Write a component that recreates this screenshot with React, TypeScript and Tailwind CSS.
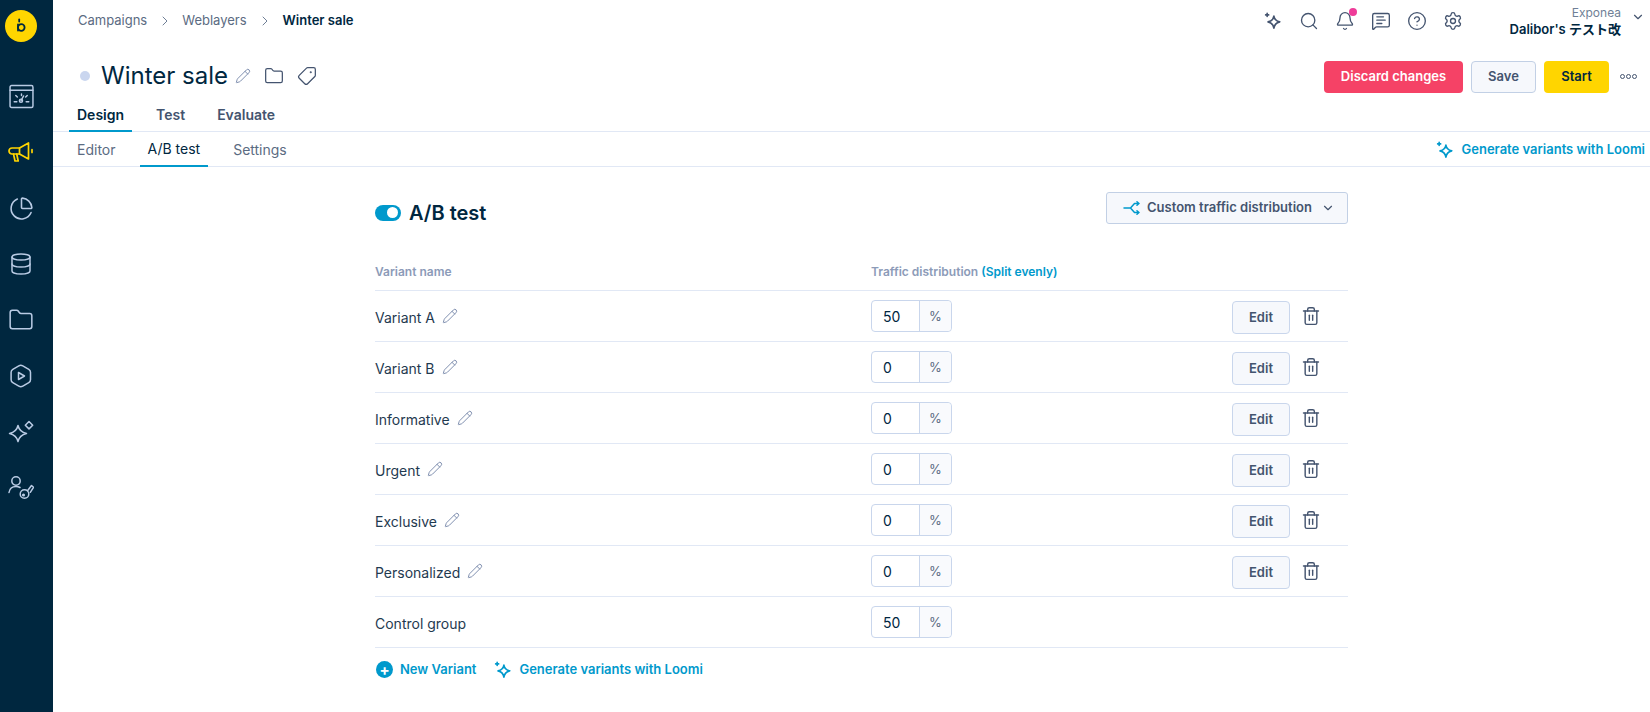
import React from 'react'
import {
  Bell,
  ChartPie,
  ChevronDown,
  ChevronRight,
  CircleHelp,
  Database,
  Folder,
  MessageSquareText,
  Pencil,
  Search,
  Settings,
  Tag,
  Trash2,
} from 'lucide-react'

const variants = [
  { name: 'Variant A', value: '50' },
  { name: 'Variant B', value: '0' },
  { name: 'Informative', value: '0' },
  { name: 'Urgent', value: '0' },
  { name: 'Exclusive', value: '0' },
  { name: 'Personalized', value: '0' },
  { name: 'Control group', value: '50', locked: true },
]

const Loomi = ({ className }: { className?: string }) => (
  <svg viewBox="0 0 20 20" fill="none" stroke="currentColor" strokeWidth="1.800" strokeLinejoin="round" strokeLinecap="round" className={className}>
    <path d="M11 4.500c.5 3.700 2 5.300 6.500 6.500-4.500 1.200-6 2.800-6.500 7-.5-4.200-2-5.800-6.500-7 4.500-1.200 6-2.800 6.500-6.500Z" />
    <path d="M3.500 1.500v3.400M1.800 3.200h3.400" />
  </svg>
)

const Logo = () => (
  <div className="w-8 h-8 rounded-full bg-[#ffd500] flex items-center justify-center">
    <svg viewBox="0 0 16 16" className="w-4 h-4" fill="none" stroke="#00273f" strokeWidth="1.800" strokeLinecap="round">
      <path d="M6.200 1.500v2" />
      <circle cx="8.300" cy="9.500" r="3.300" />
      <path d="M5 6.500v6" />
    </svg>
  </div>
)

const DashboardIcon = () => (
  <svg viewBox="0 0 24 24" className="w-[25px] h-[25px]" fill="none" stroke="#b9cbe4" strokeWidth="1.400" strokeLinecap="round">
    <rect x="1" y="1.500" width="22" height="21" rx="1.500" />
    <path d="M1 6h22M5 17h2.500M16.500 17H19M6.500 11l1.500 1.500M17.500 11 16 12.500M12 9.500v1.500M14 11.500 11.500 16" />
    <circle cx="11.500" cy="16" r="1.500" />
  </svg>
)

const MegaphoneIcon = () => (
  <svg viewBox="0 0 26 22" className="w-[26px] h-[22px]" fill="none" stroke="#ffd500" strokeWidth="1.700" strokeLinejoin="round" strokeLinecap="round">
    <path d="M4 7h7.500L20.500 2v16l-9-5H4a3 3 0 0 1 0-6Z" />
    <path d="M5.500 13l1.500 7h3.200l-1.500-7M11.500 7v6M24 8.500v3" />
  </svg>
)

const PlayHexIcon = () => (
  <svg viewBox="0 0 24 24" className="w-6 h-6" fill="none" stroke="#b9cbe4" strokeWidth="1.500" strokeLinejoin="round">
    <path d="M9.800 1.800a4 4 0 0 1 4 0l6 3.500a3.500 3.500 0 0 1 1.700 3v7.400a3.500 3.500 0 0 1-1.700 3l-6 3.500a4 4 0 0 1-4 0l-6-3.500a3.500 3.500 0 0 1-1.700-3V8.300a3.500 3.500 0 0 1 1.700-3Z" />
    <path d="M9.500 8.500v7l6-3.500Z" />
  </svg>
)

const SparkleIcon = () => (
  <svg viewBox="0 0 26 24" className="w-[26px] h-6" fill="none" stroke="#b9cbe4" strokeWidth="1.500" strokeLinejoin="round">
    <path d="M10 5.500c1 4.500 3 6.700 8.500 8-5.500 1.300-7.500 3.500-8.500 8-1-4.500-3-6.700-8.500-8 5.500-1.300 7.500-3.500 8.500-8Z" />
    <path d="m21 1.500 3.700 3.700-3.700 3.700-3.700-3.700Z" />
  </svg>
)

const UserKeyIcon = () => (
  <svg viewBox="0 0 26 26" className="w-[26px] h-[26px]" fill="none" stroke="#b9cbe4" strokeWidth="1.500" strokeLinecap="round" strokeLinejoin="round">
    <circle cx="8" cy="6" r="4.200" />
    <path d="M1 17.500c.6-3.800 3.300-6 7-6 1.500 0 2.800.3 4 1" />
    <circle cx="16.500" cy="19" r="4.300" />
    <path d="M19.500 15.800 23.500 10.500l2 1.800-3.200 5" />
    <circle cx="15.500" cy="20" r="0.800" />
  </svg>
)

const SplitIcon = () => (
  <svg viewBox="0 0 18 14" className="w-[18px] h-[14px]" fill="none" stroke="#0099cc" strokeWidth="1.500" strokeLinecap="round" strokeLinejoin="round">
    <path d="M1 7h6.500l4-4.500H16M7.500 7l4 4.500H16M14 .8 16 2.500 14 4.200M14 9.800l2 1.700-2 1.700" />
  </svg>
)

const App = () => {
  return (
    <div className="flex h-[712px] w-[1650px] overflow-hidden bg-white text-[#00273f] font-['Inter','Noto_Sans_CJK_JP',sans-serif]">
      <aside className="w-[53px] shrink-0 bg-[#00273f] flex flex-col items-center pt-[10px] pr-[11px]">
        <Logo />
        <nav className="mt-[26px] flex flex-col items-center [&>div]:h-[56px] [&>div]:flex [&>div]:items-center [&>div]:justify-center">
          <div><DashboardIcon /></div>
          <div><MegaphoneIcon /></div>
          <div><ChartPie className="w-[25px] h-[25px] text-[#b9cbe4]" strokeWidth={1.500} /></div>
          <div><Database className="w-6 h-6 text-[#b9cbe4]" strokeWidth={1.500} /></div>
          <div><Folder className="w-[26px] h-[26px] text-[#b9cbe4]" strokeWidth={1.400} /></div>
          <div><PlayHexIcon /></div>
          <div><SparkleIcon /></div>
          <div><UserKeyIcon /></div>
        </nav>
      </aside>

      <main className="flex-1 min-w-0 flex flex-col">
        <header className="h-[41px] flex items-center pl-[25px] pr-[5px]">
          <div className="flex items-center text-[13px] text-[#5b6b82]">
            <span>Campaigns</span>
            <ChevronRight className="w-4 h-4 ml-[10px] mr-[9px] text-[#6f7f96]" strokeWidth={1.500} />
            <span>Weblayers</span>
            <ChevronRight className="w-4 h-4 mx-[10px] text-[#6f7f96]" strokeWidth={1.500} />
            <span className="font-semibold text-[#00273f]">Winter sale</span>
          </div>
          <div className="ml-auto flex items-center text-[#44546f]">
            <Loomi className="w-[18px] h-[18px]" />
            <Search className="w-5 h-5 ml-[17px]" strokeWidth={1.600} />
            <div className="relative ml-4">
              <Bell className="w-5 h-5" strokeWidth={1.600} />
              <span className="absolute -top-[3px] -right-[2px] w-2 h-2 rounded-full bg-[#ee3c99]" />
            </div>
            <MessageSquareText className="w-5 h-5 ml-4" strokeWidth={1.600} />
            <CircleHelp className="w-5 h-5 ml-4" strokeWidth={1.600} />
            <Settings className="w-5 h-5 ml-4" strokeWidth={1.600} />
            <div className="ml-[47px] flex flex-col items-end leading-[17px] self-start mt-[1px]">
              <span className="text-[12px] text-[#6f7f96]">Exponea</span>
              <span className="text-[13px] font-semibold text-[#00273f]">Dalibor's テスト改</span>
            </div>
            <ChevronDown className="w-[14px] h-[14px] ml-[10px] mb-[8px]" strokeWidth={2} />
          </div>
        </header>

        <div className="h-[57px] flex items-center pl-[27px] pr-[10px] pt-[12px]">
          <span className="w-[10px] h-[10px] rounded-full bg-[#cad6ef]" />
          <h1 className="ml-[11px] text-[24px] leading-[30px] text-[#00273f]">Winter sale</h1>
          <Pencil className="w-4 h-4 ml-[7px] text-[#8090b0]" strokeWidth={1.500} />
          <Folder className="w-5 h-5 ml-[13px] text-[#44546f]" strokeWidth={1.500} />
          <Tag className="w-5 h-5 ml-[13px] text-[#44546f] rotate-90" strokeWidth={1.500} />
          <div className="ml-auto flex items-center mt-[2px]">
            <button className="h-8 w-[139px] rounded-[4px] bg-[#f54266] text-white text-[13px] font-semibold">Discard changes</button>
            <button className="ml-2 h-8 w-[65px] rounded-[4px] border border-[#c2d0e5] bg-[#f6f8fc] text-[#44546f] text-[13px] font-semibold">Save</button>
            <button className="ml-2 h-8 w-[65px] rounded-[4px] bg-[#ffd500] text-[#00273f] text-[13px] font-semibold">Start</button>
            <span className="ml-[11px] flex gap-[1px] mr-[3px]">
              <i className="w-[5px] h-[5px] rounded-full border border-[#44546f]" />
              <i className="w-[5px] h-[5px] rounded-full border border-[#44546f]" />
              <i className="w-[5px] h-[5px] rounded-full border border-[#44546f]" />
            </span>
          </div>
        </div>

        <div className="h-[34px] flex items-stretch border-b border-[#e1e8f5] pl-[16px] text-[14px] font-semibold text-[#44546f]">
          <div className="px-2 -mb-px flex items-center border-b-2 border-[#0099cc] text-[#00273f]">Design</div>
          <div className="ml-[16px] px-2 flex items-center">Test</div>
          <div className="ml-[16px] px-2 flex items-center">Evaluate</div>
        </div>

        <div className="h-[35px] flex items-stretch border-b border-[#e1e8f5] pl-[16px] pr-[5px] text-[14px] text-[#5b6b82]">
          <div className="px-2 flex items-center">Editor</div>
          <div className="ml-[16px] px-2 -mb-px flex items-center border-b-2 border-[#0099cc] text-[#00273f]">A/B test</div>
          <div className="ml-[17px] px-2 flex items-center">Settings</div>
          <div className="ml-auto flex items-center pt-[1px] text-[13px] font-semibold text-[#0099cc]">
            <Loomi className="w-[18px] h-[18px] mr-[8px]" />
            Generate variants with Loomi
          </div>
        </div>

        <section className="w-[973px] ml-[322px]">
          <div className="flex items-center justify-between mt-[25px] h-[31px]">
            <div className="flex items-center pt-[10px]">
              <span className="w-[26px] h-4 rounded-full bg-[#0099cc] flex items-center justify-end pr-[3px]">
                <span className="w-[11px] h-[11px] rounded-full bg-white" />
              </span>
              <h2 className="ml-2 text-[20px] font-semibold leading-none">A/B test</h2>
            </div>
            <button className="w-[242px] h-[32px] flex items-center pl-[16px] rounded-[3px] border border-[#c2d0e5] bg-[#f6f8fc] text-[13px] font-semibold text-[#44546f]">
              <SplitIcon />
              <span className="ml-[6px]">Custom traffic distribution</span>
              <ChevronDown className="w-[14px] h-[14px] ml-[9px]" strokeWidth={2} />
            </button>
          </div>

          <div className="mt-[30px] h-[38px] flex items-center border-b border-[#e1e8f5] text-[12px] font-semibold text-[#8c9bb8]">
            <div className="w-[496px]">Variant name</div>
            <div>Traffic distribution <span className="text-[#0099cc]">(Split evenly)</span></div>
          </div>

          {variants.map((v) => (
            <div key={v.name} className="h-[51px] flex items-center border-b border-[#e1e8f5]">
              <div className="w-[496px] pt-[2px] flex items-center text-[14px] text-[#1f3a50]">
                {v.name}
                {!v.locked && <Pencil className="w-4 h-4 ml-[7px] -mt-[2px] text-[#8090b0]" strokeWidth={1.500} />}
              </div>
              <div className="w-[81px] h-8 flex rounded-[4px] border border-[#c9d6ec] text-[14px]">
                <div className="w-[48px] flex items-center pl-[11px] pt-[1px] border-r border-[#c9d6ec]">{v.value}</div>
                <div className="flex-1 flex items-center justify-center pt-[1px] text-[13px] text-[#5b6b82] bg-[#f9fafd] rounded-r-[4px]">%</div>
              </div>
              {!v.locked && (
                <div className="ml-auto flex items-center mr-[27px]">
                  <button className="w-[58px] h-[33px] mt-[2px] pt-[2px] rounded-[4px] border border-[#c9d6ec] bg-[#f6f8fc] text-[13px] font-semibold text-[#44546f]">Edit</button>
                  <Trash2 className="w-5 h-5 ml-[11px] text-[#44546f]" strokeWidth={1.700} />
                </div>
              )}
            </div>
          ))}

          <div className="mt-[12px] flex items-center text-[13px] font-semibold text-[#0099cc]">
            <span className="w-[17px] h-[17px] ml-[1px] rounded-full bg-[#0099cc] flex items-center justify-center text-white text-[15px] leading-none font-bold">+</span>
            <span className="ml-[7px]">New Variant</span>
            <Loomi className="w-[18px] h-[18px] ml-[18px]" />
            <span className="ml-[7px]">Generate variants with Loomi</span>
          </div>
        </section>
      </main>
    </div>
  )
}

export default App
